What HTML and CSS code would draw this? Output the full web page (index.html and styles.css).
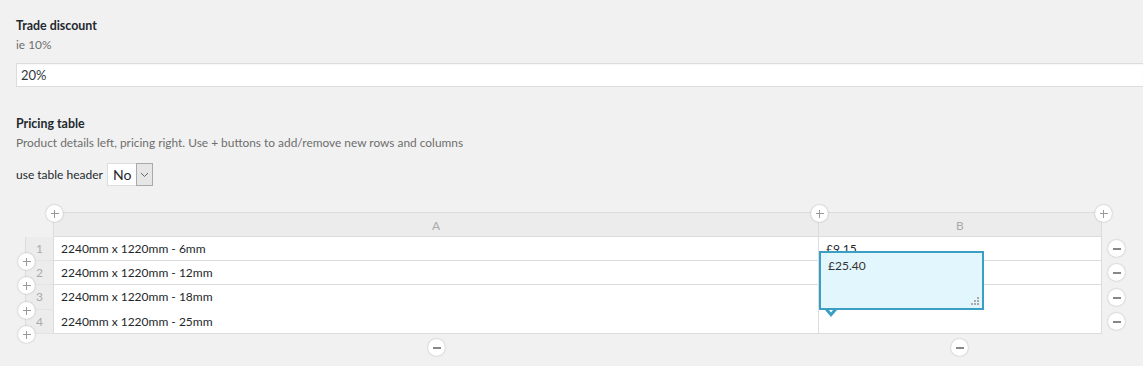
FILE: index.html
```html
<!DOCTYPE html>
<html lang="en">

<head>
    <meta charset="UTF-8">
    <meta name="viewport" content="width=device-width, initial-scale=1.0">
    <title>Trade pricing</title>
    <link rel="stylesheet" href="styles.css">
</head>

<body>
    <div class="field">
        <label class="field-label">Trade discount</label>
        <p class="field-desc">ie 10%</p>
        <input class="text-input" type="text" value="20%">
    </div>

    <div class="field pricing">
        <label class="field-label">Pricing table</label>
        <p class="field-desc">Product details left, pricing right. Use + buttons to add/remove new rows and columns</p>

        <div class="header-option">
            <span>use table header</span>
            <div class="select">
                <span class="select-value">No</span>
                <span class="select-arrow">
                    <svg width="9" height="6" viewBox="0 0 9 6"><path d="M1 1 L4.5 4.5 L8 1" fill="none" stroke="#666" stroke-width="1"/></svg>
                </span>
            </div>
        </div>

        <div class="table-editor">
            <div class="grid">
                <div class="corner"></div>
                <div class="col-head">A</div>
                <div class="col-head">B</div>

                <div class="row-num">1</div>
                <div class="cell">2240mm x 1220mm - 6mm</div>
                <div class="cell">£9.15</div>

                <div class="row-num">2</div>
                <div class="cell">2240mm x 1220mm - 12mm</div>
                <div class="cell"></div>

                <div class="row-num tall">3</div>
                <div class="cell tall no-line">2240mm x 1220mm - 18mm</div>
                <div class="cell tall no-line"></div>

                <div class="row-num">4</div>
                <div class="cell">2240mm x 1220mm - 25mm</div>
                <div class="cell"></div>
            </div>

            <!-- add column -->
            <span class="btn add" style="left: 21px; top: -7px;"></span>
            <span class="btn add" style="left: 786px; top: -7px;"></span>
            <span class="btn add" style="left: 1070px; top: -7px;"></span>

            <!-- add row -->
            <span class="btn add" style="left: -7px; top: 41px;"></span>
            <span class="btn add" style="left: -7px; top: 65px;"></span>
            <span class="btn add" style="left: -7px; top: 90px;"></span>
            <span class="btn add" style="left: -7px; top: 114px;"></span>

            <!-- remove row -->
            <span class="btn remove" style="left: 1083px; top: 28px;"></span>
            <span class="btn remove" style="left: 1083px; top: 52px;"></span>
            <span class="btn remove" style="left: 1083px; top: 77px;"></span>
            <span class="btn remove" style="left: 1083px; top: 101px;"></span>

            <!-- remove column -->
            <span class="btn remove" style="left: 403px; top: 127px;"></span>
            <span class="btn remove" style="left: 926px; top: 127px;"></span>

            <div class="cell-editor">
                <span>£25.40</span>
                <svg class="grip" width="8" height="8" viewBox="0 0 8 8">
                    <rect x="6" y="0" width="2" height="2" fill="#aaa"/>
                    <rect x="3" y="3" width="2" height="2" fill="#aaa"/>
                    <rect x="6" y="3" width="2" height="2" fill="#aaa"/>
                    <rect x="0" y="6" width="2" height="2" fill="#aaa"/>
                    <rect x="3" y="6" width="2" height="2" fill="#aaa"/>
                    <rect x="6" y="6" width="2" height="2" fill="#aaa"/>
                </svg>
                <svg class="pointer" width="12" height="7" viewBox="0 0 12 7"><path d="M0 0 L4 0 L6 2.5 L8 0 L12 0 L6 7 Z" fill="#3a9fc2"/></svg>
            </div>
        </div>
    </div>
</body>

</html>
```

FILE: styles.css
```css
html {
    background: #f1f1f1;
}

body {
    margin: 0;
    padding: 0 0 40px 16px;
    font-family: Lato, "Open Sans", sans-serif;
    font-size: 12px;
    color: #23282d;
}

.field {
    padding-top: 18px;
}

.field-label {
    display: block;
    font-weight: bold;
    font-size: 12.4px;
    line-height: 16px;
}

.field-desc {
    margin: 3px 0 0;
    font-size: 11.9px;
    line-height: 16px;
    color: #6e6e6e;
}

.text-input {
    display: block;
    box-sizing: border-box;
    width: 1127px;
    height: 24px;
    margin: 10px 0 0;
    padding: 0 4px;
    border: 1px solid #ddd;
    border-right: none;
    background: #fff;
    font-family: inherit;
    font-size: 13px;
    color: #32373c;
    box-shadow: inset 0 1px 2px rgba(0, 0, 0, 0.04);
}

.pricing {
    padding-top: 29px;
}

.header-option {
    display: flex;
    align-items: center;
    gap: 4px;
    margin-top: 12px;
}

.select {
    display: flex;
    height: 23px;
    box-sizing: border-box;
    border: 1px solid #ddd;
    background: #fff;
}

.select-value {
    width: 28px;
    padding-left: 5px;
    box-sizing: border-box;
    font-size: 14px;
    line-height: 21px;
}

.select-arrow {
    display: flex;
    align-items: center;
    justify-content: center;
    width: 17px;
    box-sizing: border-box;
    background: #e6e6e6;
    margin: -1px -1px -1px 0;
    border: 1px solid #aaa;
}

.table-editor {
    position: relative;
    width: 1077px;
    margin: 26px 0 0 9px;
}

.grid {
    display: grid;
    grid-template-columns: 28px 765px 284px;
}

.corner {
    height: 25px;
}

.col-head {
    height: 25px;
    box-sizing: border-box;
    background: #ececec;
    border-top: 1px solid #dcdcdc;
    border-bottom: 1px solid #dcdcdc;
    border-left: 1px solid #dcdcdc;
    text-align: center;
    line-height: 25px;
    color: #aaa;
}

.col-head + .col-head {
    border-right: 1px solid #dcdcdc;
}

.row-num {
    height: 24px;
    box-sizing: border-box;
    background: #ececec;
    border-left: 1px solid #dcdcdc;
    border-bottom: 1px solid #e3e3e3;
    text-align: center;
    line-height: 24px;
    color: #aaa;
}

.cell {
    height: 24px;
    box-sizing: border-box;
    background: #fff;
    border-left: 1px solid #dcdcdc;
    border-bottom: 1px solid #dcdcdc;
    padding-left: 7px;
    line-height: 24px;
    white-space: nowrap;
    overflow: hidden;
}

.cell:nth-child(3n) {
    border-right: 1px solid #dcdcdc;
}

.tall {
    height: 25px;
}

.no-line {
    border-bottom-color: #fff;
}

.btn {
    position: absolute;
    width: 17px;
    height: 17px;
    border-radius: 50%;
    background: #fff;
    box-shadow: 0 0 2px rgba(0, 0, 0, 0.28);
}

.btn::before {
    content: "";
    position: absolute;
    left: 4.5px;
    top: 8px;
    width: 8px;
    height: 1px;
    background: #999;
}

.add::after {
    content: "";
    position: absolute;
    left: 8px;
    top: 4.5px;
    width: 1px;
    height: 8px;
    background: #999;
}

.remove::before {
    left: 4.5px;
    top: 7.5px;
    width: 8px;
    height: 2px;
    background: #888;
}

.cell-editor {
    position: absolute;
    left: 794px;
    top: 39px;
    width: 165px;
    height: 59px;
    box-sizing: border-box;
    border: 2px solid #3a9fc2;
    background: #e2f6fd;
    padding: 5px 0 0 7px;
    line-height: 16px;
    color: #333;
}

.grip {
    position: absolute;
    right: 3px;
    bottom: 3px;
}

.pointer {
    position: absolute;
    left: 4px;
    bottom: -9px;
}
```
